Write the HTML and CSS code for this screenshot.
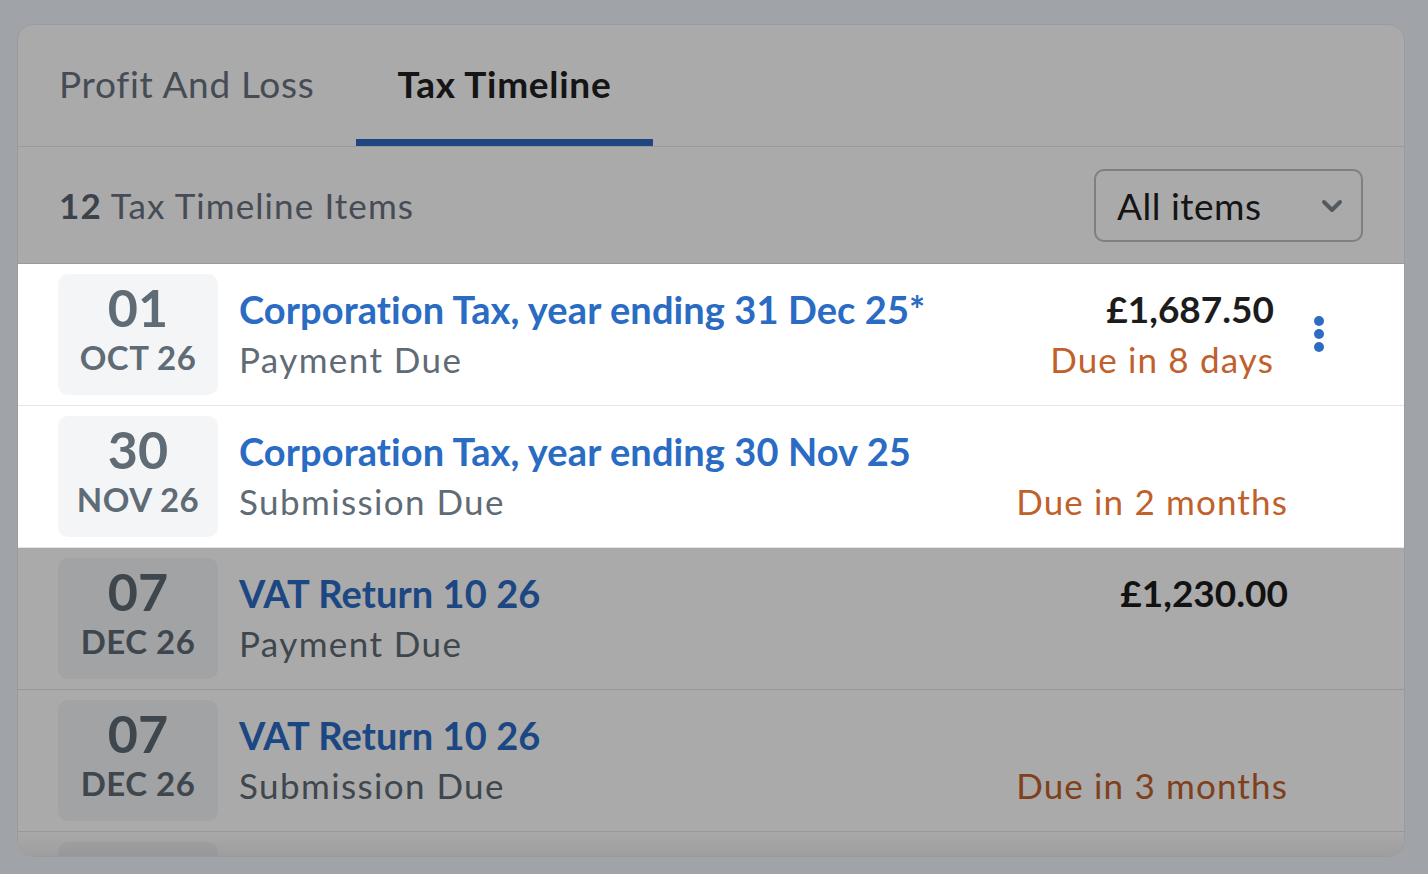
FILE: index.html
```html
<!DOCTYPE html>
<html lang="en">

<head>
  <meta charset="UTF-8">
  <meta name="viewport" content="width=device-width, initial-scale=1.0">
  <title>Tax Timeline</title>
  <link rel="stylesheet" href="styles.css">
</head>

<body>
  <div class="card">
    <nav class="tabs">
      <a class="tab" href="#">Profit And Loss</a>
      <a class="tab active" href="#">Tax Timeline</a>
    </nav>

    <div class="list-head">
      <div class="count"><b>12</b> Tax Timeline Items</div>
      <div class="select">
        <span>All items</span>
        <svg class="chevron" width="22" height="14" viewBox="0 0 22 14">
          <path d="M3 3 L11 11 L19 3" fill="none" stroke="currentColor" stroke-width="4" stroke-linecap="round" stroke-linejoin="round" />
        </svg>
      </div>
    </div>

    <div class="timeline">
      <div class="item spot with-menu">
        <div class="date"><span class="day">01</span><span class="month">OCT 26</span></div>
        <div class="info">
          <a class="title" href="#">Corporation Tax, year ending 31 Dec 25*</a>
          <div class="kind">Payment Due</div>
        </div>
        <div class="amounts">
          <div class="amount">£1,687.50</div>
          <div class="due">Due in 8 days</div>
        </div>
        <button class="kebab" aria-label="More">
          <svg width="10" height="38" viewBox="0 0 10 38">
            <circle cx="5" cy="5" r="5" />
            <circle cx="5" cy="18" r="5" />
            <circle cx="5" cy="31" r="5" />
          </svg>
        </button>
      </div>

      <div class="item spot">
        <div class="date"><span class="day">30</span><span class="month">NOV 26</span></div>
        <div class="info">
          <a class="title" href="#">Corporation Tax, year ending 30 Nov 25</a>
          <div class="kind">Submission Due</div>
        </div>
        <div class="amounts">
          <div class="amount"></div>
          <div class="due">Due in 2 months</div>
        </div>
      </div>

      <div class="item">
        <div class="date"><span class="day">07</span><span class="month">DEC 26</span></div>
        <div class="info">
          <a class="title" href="#">VAT Return 10 26</a>
          <div class="kind">Payment Due</div>
        </div>
        <div class="amounts">
          <div class="amount">£1,230.00</div>
          <div class="due"></div>
        </div>
      </div>

      <div class="item">
        <div class="date"><span class="day">07</span><span class="month">DEC 26</span></div>
        <div class="info">
          <a class="title" href="#">VAT Return 10 26</a>
          <div class="kind">Submission Due</div>
        </div>
        <div class="amounts">
          <div class="amount"></div>
          <div class="due">Due in 3 months</div>
        </div>
      </div>

      <!-- next row, scrolled out of view -->
      <div class="item">
        <div class="date"></div>
      </div>
    </div>
  </div>

  <!-- spotlight overlay -->
  <div class="dim"></div>
</body>

</html>
```

FILE: styles.css
```css
* {
  box-sizing: border-box;
}

body {
  margin: 0;
  padding: 24px 23px 0 17px;
  height: 874px;
  overflow: hidden;
  background-color: #f1f5fc;
  font-family: 'Lato', 'Noto Sans', sans-serif;
  color: #202020;
}

a {
  text-decoration: none;
}

.card {
  position: relative;
  height: 833px;
  background-color: #fff;
  border: 1px solid #e6e9f0;
  border-radius: 16px;
  overflow: hidden;
}

/* scroll fade at the bottom */
.card::after {
  content: '';
  position: absolute;
  left: 0;
  right: 0;
  bottom: 0;
  height: 26px;
  background: linear-gradient(rgba(0, 0, 0, 0), rgba(0, 0, 0, 0.07));
}

/* TABS */
.tabs {
  display: flex;
  height: 122px;
  border-bottom: 1px solid #e6e8ee;
}

.tab {
  display: flex;
  align-items: center;
  padding: 3px 42px 0 41px;
  font-size: 37px;
  letter-spacing: 0.7px;
  color: #687280;
  border-bottom: 7px solid transparent;
}

.tab.active {
  font-weight: 700;
  color: #202020;
  border-bottom-color: #2f69c0;
}

/* LIST HEADER */
.list-head {
  display: flex;
  align-items: center;
  justify-content: space-between;
  height: 117px;
  padding: 0 41px;
  border-bottom: 1px solid #e6e8ee;
}

.count {
  font-size: 35px;
  letter-spacing: 1.1px;
  color: #687280;
}

.count b {
  color: #5a6470;
}

.select {
  display: flex;
  align-items: center;
  justify-content: space-between;
  width: 269px;
  height: 73px;
  padding: 0 18px 0 21px;
  border: 2px solid #bcbfc3;
  border-radius: 10px;
  font-size: 37px;
  letter-spacing: 0.5px;
  color: #202020;
}

.chevron {
  color: #7e868d;
  margin-top: 2px;
}

/* TIMELINE ROWS */
.item {
  display: flex;
  align-items: center;
  padding: 10px 116px 10px 40px;
  border-bottom: 1px solid #e4e5ea;
  background-color: #fff;
}

.item.spot {
  position: relative;
  z-index: 2;
}

.item.with-menu {
  padding-right: 80px;
}

.date {
  display: flex;
  flex-direction: column;
  align-items: center;
  flex: none;
  width: 160px;
  height: 121px;
  padding-top: 8px;
  border-radius: 10px;
  background-color: #f4f5f7;
  color: #5f6b75;
}

.day {
  font-size: 52px;
  font-weight: 700;
  line-height: 50px;
}

.month {
  margin-top: 5px;
  font-size: 33px;
  font-weight: 700;
  line-height: 40px;
  letter-spacing: 0.5px;
}

.info {
  flex: 1;
  margin-left: 21px;
  margin-top: -2px;
}

.title {
  display: block;
  font-size: 38px;
  font-weight: 700;
  line-height: 50px;
  letter-spacing: 0.1px;
  color: #2a6bc4;
}

.kind {
  font-size: 35px;
  line-height: 50px;
  letter-spacing: 1.4px;
  color: #5f6b75;
}

.amounts {
  text-align: right;
  margin-top: -2px;
}

.amount {
  height: 50px;
  font-size: 37px;
  font-weight: 700;
  line-height: 50px;
  color: #1c1c1c;
}

.due {
  height: 50px;
  font-size: 35px;
  line-height: 50px;
  letter-spacing: 1.15px;
  color: #c0602b;
}

.kebab {
  margin-left: 40px;
  padding: 0;
  border: 0;
  background: none;
  fill: #2e6cc4;
  line-height: 0;
}

.dim {
  position: fixed;
  top: 0;
  left: 0;
  width: 100%;
  height: 100%;
  z-index: 1;
  background-color: rgba(0, 0, 0, 0.333);
}
```
